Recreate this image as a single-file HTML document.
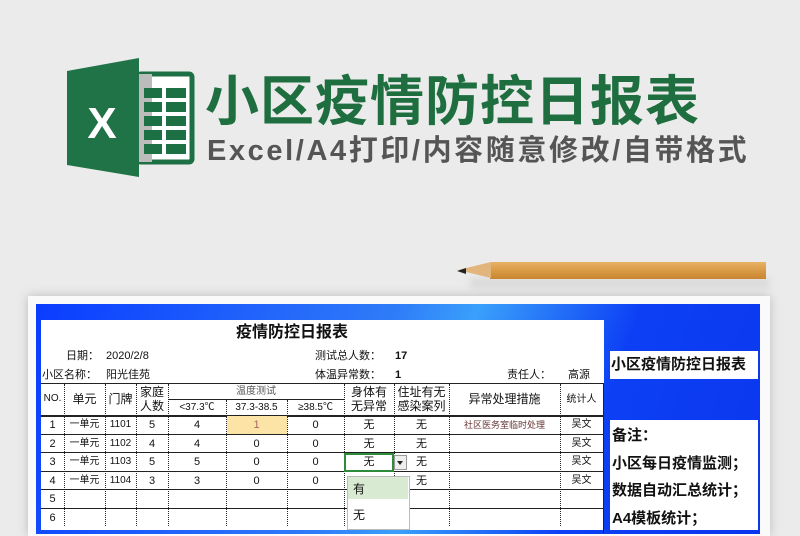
<!DOCTYPE html>
<html><head><meta charset="utf-8"><style>
body{margin:0;width:800px;height:526px;overflow:hidden;background:#ebebeb;font-family:"Liberation Sans","Noto Sans CJK SC",sans-serif;position:relative}
.a{position:absolute}
.t{position:absolute;white-space:nowrap;font-size:11px;color:#111;line-height:14px}
.c{text-align:center}
.vl{position:absolute;border-left:1px dotted #222;width:0}
.hl{position:absolute;height:0;border-top:1.5px solid #222}
.r .t{top:0}
</style></head><body>
<!-- logo -->
<svg class="a" style="left:60px;top:55px" width="140" height="125" viewBox="60 55 140 125">
<rect x="138" y="74" width="54" height="88" rx="3" fill="#fff" stroke="#1d7044" stroke-width="5"/>
<rect x="138" y="74" width="14" height="88" fill="#bcbcbc"/>
<g fill="#1d7044">
<rect x="144" y="88" width="18" height="10"/><rect x="166" y="88" width="20" height="10"/>
<rect x="144" y="102" width="18" height="10"/><rect x="166" y="102" width="20" height="10"/>
<rect x="144" y="116" width="18" height="10"/><rect x="166" y="116" width="20" height="10"/>
<rect x="144" y="130" width="18" height="10"/><rect x="166" y="130" width="20" height="10"/>
<rect x="144" y="144" width="18" height="10"/><rect x="166" y="144" width="20" height="10"/>
</g>
<polygon points="67,71 139,58 139,177 67,165" fill="#1f7346"/>
<text x="102" y="138" font-family="Liberation Sans" font-weight="bold" font-size="44" fill="#fff" text-anchor="middle">X</text>
</svg>
<div class="t" style="left:205px;top:72px;font-size:54px;line-height:60px;font-weight:bold;color:#1f6e40;letter-spacing:1px">小区疫情防控日报表</div>
<div class="t" style="left:207px;top:134px;font-size:29px;line-height:34px;font-weight:bold;color:#555;letter-spacing:2.6px">Excel/A4打印/内容随意修改/自带格式</div>
<!-- pencil -->
<div class="a" style="left:470px;top:279px;width:300px;height:8px;background:#ccc;filter:blur(4px);opacity:.7"></div>
<div class="a" style="left:490px;top:262px;width:276px;height:17px;background:linear-gradient(#e8b266,#d99a45 50%,#c98530)"></div>
<div class="a" style="left:458px;top:262px;width:0;height:0;border-top:8.5px solid transparent;border-bottom:8.5px solid transparent;border-right:33px solid #e2b57c"></div>
<div class="a" style="left:457px;top:268px;width:0;height:0;border-top:3px solid transparent;border-bottom:3px solid transparent;border-right:9px solid #222"></div>
<!-- paper -->
<div class="a" style="left:28px;top:296px;width:742px;height:240px;background:#fafafa;box-shadow:0 0 10px #bbb"></div>
<div class="a" style="left:36px;top:304px;width:724px;height:230px;background:linear-gradient(110deg,#0a3cff 0%,#2f7cf8 45%,#3aa0fb 55%,#0d40f5 75%,#0a36ee 100%)"></div>
<div class="a" style="left:41px;top:320px;width:563px;height:210px;background:#fff"></div>
<div class="a" style="left:610px;top:351px;width:148px;height:28px;background:#fff"></div>
<div class="t" style="left:611px;top:356px;font-size:15px;line-height:18px;font-weight:bold">小区疫情防控日报表</div>
<div class="a" style="left:610px;top:420px;width:148px;height:110px;background:#fff"></div>
<div class="t" style="left:612px;top:427px;font-size:15px;line-height:18px;font-weight:bold">备注：</div>
<div class="t" style="left:612px;top:455px;font-size:15px;line-height:18px;font-weight:bold">小区每日疫情监测；</div>
<div class="t" style="left:612px;top:482px;font-size:15px;line-height:18px;font-weight:bold">数据自动汇总统计；</div>
<div class="t" style="left:612px;top:510px;font-size:15px;line-height:18px;font-weight:bold">A4模板统计；</div>
<!-- sheet -->
<div class="t" style="left:236px;top:324px;font-size:16px;line-height:18px;font-weight:bold">疫情防控日报表</div>
<div class="t" style="left:66px;top:349px">日期：</div><div class="t" style="left:106px;top:349px">2020/2/8</div>
<div class="t" style="left:42px;top:368px">小区名称：</div><div class="t" style="left:106px;top:368px">阳光佳苑</div>
<div class="t" style="left:315px;top:349px">测试总人数：</div><div class="t" style="left:395px;top:349px;font-weight:bold">17</div>
<div class="t" style="left:315px;top:368px">体温异常数：</div><div class="t" style="left:395px;top:368px;font-weight:bold">1</div>
<div class="t" style="left:507px;top:368px">责任人：</div><div class="t" style="left:568px;top:368px">高源</div>
<div class="a" style="left:41px;top:383px;width:562px;height:150px;border-right:1.5px solid #222"></div>
<div class="hl" style="left:41px;top:383px;width:563px"></div>
<div class="hl" style="left:168px;top:399px;width:176px;border-top-width:1px"></div>
<div class="hl" style="left:41px;top:415px;width:563px;border-top-width:2px"></div>
<div class="hl" style="left:41px;top:434px;width:563px"></div>
<div class="hl" style="left:41px;top:452px;width:563px"></div>
<div class="hl" style="left:41px;top:471px;width:563px"></div>
<div class="hl" style="left:41px;top:489px;width:563px"></div>
<div class="hl" style="left:41px;top:508px;width:563px"></div>
<div class="vl" style="left:64px;top:384px;height:142px"></div>
<div class="vl" style="left:105px;top:384px;height:142px"></div>
<div class="vl" style="left:136px;top:384px;height:142px"></div>
<div class="vl" style="left:168px;top:384px;height:142px"></div>
<div class="vl" style="left:226px;top:400px;height:126px"></div>
<div class="vl" style="left:287px;top:400px;height:126px"></div>
<div class="vl" style="left:344px;top:384px;height:142px"></div>
<div class="vl" style="left:394px;top:384px;height:142px"></div>
<div class="vl" style="left:449px;top:384px;height:142px"></div>
<div class="vl" style="left:560px;top:384px;height:142px"></div>
<div class="a" style="left:227px;top:416px;width:60px;height:18px;background:#fbe4a6"></div>
<div class="t c" style="left:41px;top:392px;width:23px;font-size:10px">NO.</div>
<div class="t c" style="left:64px;top:392px;width:41px;font-size:12px">单元</div>
<div class="t c" style="left:105px;top:392px;width:31px;font-size:12px">门牌</div>
<div class="t c" style="left:136px;top:385px;width:32px;font-size:12px">家庭<br>人数</div>
<div class="t c" style="left:168px;top:385px;width:176px;font-size:10px;color:#555">温度测试</div>
<div class="t c" style="left:168px;top:401px;width:58px;font-size:10px">&lt;37.3℃</div>
<div class="t c" style="left:226px;top:401px;width:61px;font-size:10px">37.3-38.5</div>
<div class="t c" style="left:287px;top:401px;width:57px;font-size:10px">≥38.5℃</div>
<div class="t c" style="left:344px;top:385px;width:50px;font-size:12px">身体有<br>无异常</div>
<div class="t c" style="left:394px;top:385px;width:55px;font-size:12px">住址有无<br>感染案列</div>
<div class="t c" style="left:449px;top:392px;width:111px;font-size:12px">异常处理措施</div>
<div class="t c" style="left:560px;top:393px;width:43px;font-size:10px">统计人</div>
<!-- rows -->
<div class="a r" style="left:0;top:418px;width:800px">
<div class="t c" style="left:41px;width:23px">1</div><div class="t c" style="left:64px;width:41px;font-size:10px">一单元</div><div class="t c" style="left:105px;width:31px;font-size:10px">1101</div><div class="t c" style="left:136px;width:32px">5</div><div class="t c" style="left:168px;width:58px">4</div><div class="t c" style="left:226px;width:61px;color:#a66">1</div><div class="t c" style="left:287px;width:57px">0</div><div class="t c" style="left:344px;width:50px">无</div><div class="t c" style="left:394px;width:55px">无</div><div class="t c" style="left:449px;width:111px;font-size:9px;color:#633">社区医务室临时处理</div><div class="t c" style="left:560px;width:43px;font-size:10px">吴文</div></div>
<div class="a r" style="left:0;top:437px;width:800px">
<div class="t c" style="left:41px;width:23px">2</div><div class="t c" style="left:64px;width:41px;font-size:10px">一单元</div><div class="t c" style="left:105px;width:31px;font-size:10px">1102</div><div class="t c" style="left:136px;width:32px">4</div><div class="t c" style="left:168px;width:58px">4</div><div class="t c" style="left:226px;width:61px">0</div><div class="t c" style="left:287px;width:57px">0</div><div class="t c" style="left:344px;width:50px">无</div><div class="t c" style="left:394px;width:55px">无</div><div class="t c" style="left:560px;width:43px;font-size:10px">吴文</div></div>
<div class="a r" style="left:0;top:455px;width:800px">
<div class="t c" style="left:41px;width:23px">3</div><div class="t c" style="left:64px;width:41px;font-size:10px">一单元</div><div class="t c" style="left:105px;width:31px;font-size:10px">1103</div><div class="t c" style="left:136px;width:32px">5</div><div class="t c" style="left:168px;width:58px">5</div><div class="t c" style="left:226px;width:61px">0</div><div class="t c" style="left:287px;width:57px">0</div><div class="t c" style="left:344px;width:50px">无</div><div class="t c" style="left:394px;width:55px">无</div><div class="t c" style="left:560px;width:43px;font-size:10px">吴文</div></div>
<div class="a r" style="left:0;top:474px;width:800px">
<div class="t c" style="left:41px;width:23px">4</div><div class="t c" style="left:64px;width:41px;font-size:10px">一单元</div><div class="t c" style="left:105px;width:31px;font-size:10px">1104</div><div class="t c" style="left:136px;width:32px">3</div><div class="t c" style="left:168px;width:58px">3</div><div class="t c" style="left:226px;width:61px">0</div><div class="t c" style="left:287px;width:57px">0</div><div class="t c" style="left:394px;width:55px">无</div><div class="t c" style="left:560px;width:43px;font-size:10px">吴文</div></div>
<div class="t c" style="left:41px;top:492px;width:23px">5</div>
<div class="t c" style="left:41px;top:511px;width:23px">6</div>
<!-- dropdown -->
<div class="a" style="left:344px;top:453px;width:46px;height:15px;border:2px solid #2e8b3a"></div>
<div class="a" style="left:394px;top:455px;width:13px;height:15px;background:#eee;border:1px solid #999;box-sizing:border-box"></div>
<div class="a" style="left:397px;top:461px;width:0;height:0;border-left:3.5px solid transparent;border-right:3.5px solid transparent;border-top:4px solid #222"></div>
<div class="a" style="left:347px;top:476px;width:61px;height:52px;background:#fff;border:1px solid #bbb"></div>
<div class="a" style="left:348px;top:477px;width:60px;height:22px;background:#d9ead3"></div>
<div class="t" style="left:353px;top:482px;font-size:12px">有</div>
<div class="t" style="left:353px;top:508px;font-size:12px">无</div>
</body></html>
